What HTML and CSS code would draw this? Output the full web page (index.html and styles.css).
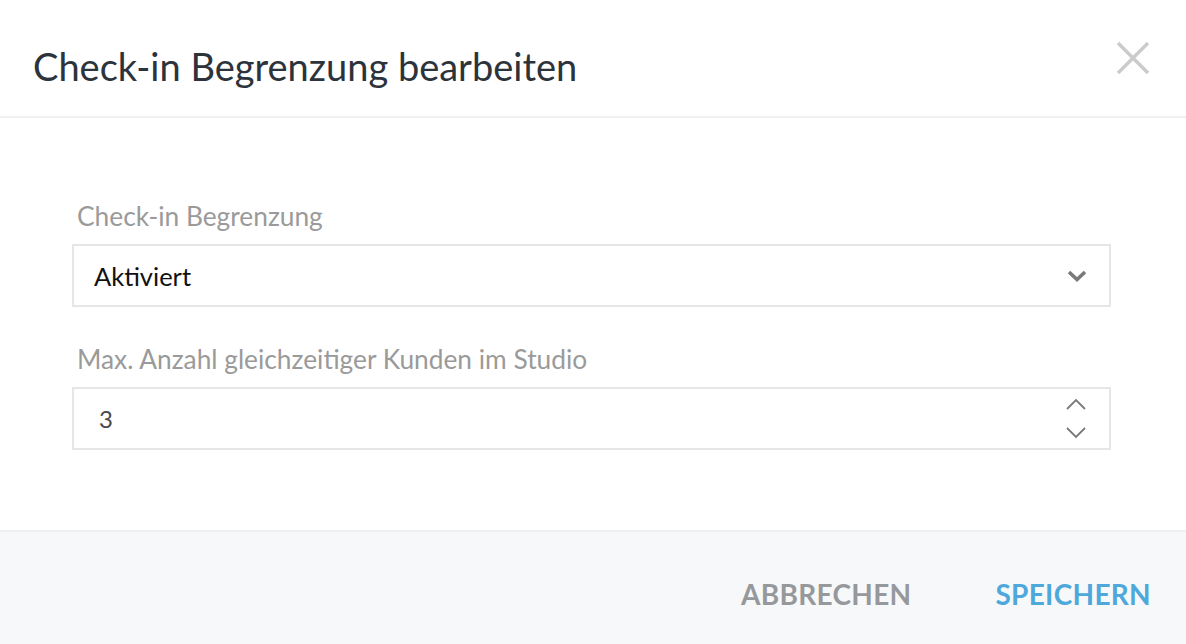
FILE: index.html
```html
<!DOCTYPE html>
<html lang="de">
<head>
    <meta charset="UTF-8">
    <title>Check-in Begrenzung bearbeiten</title>
    <link rel="stylesheet" href="styles.css">
</head>
<body>
    <div class="modal">
        <header class="modal-header">
            <h1>Check-in Begrenzung bearbeiten</h1>
            <button class="close" aria-label="Schließen">
                <svg width="34" height="34" viewBox="0 0 34 34">
                    <path d="M2 2 L32 32 M32 2 L2 32" stroke="#cbcbcb" stroke-width="3.4" fill="none"/>
                </svg>
            </button>
        </header>
        <div class="modal-body">
            <div class="field">
                <label>Check-in Begrenzung</label>
                <div class="select">
                    <span>Aktiviert</span>
                    <svg width="20" height="14" viewBox="0 0 20 14">
                        <path d="M2 3 L10 10.5 L18 3" stroke="#7a7a7a" stroke-width="3.6" fill="none"/>
                    </svg>
                </div>
            </div>
            <div class="field">
                <label>Max. Anzahl gleichzeitiger Kunden im Studio</label>
                <div class="number">
                    <span>3</span>
                    <span class="spinner">
                        <svg width="22" height="12" viewBox="0 0 22 12">
                            <path d="M2 11 L11 2 L20 11" stroke="#7a7a7a" stroke-width="1.8" fill="none"/>
                        </svg>
                        <svg width="22" height="12" viewBox="0 0 22 12">
                            <path d="M2 1 L11 10 L20 1" stroke="#7a7a7a" stroke-width="1.8" fill="none"/>
                        </svg>
                    </span>
                </div>
            </div>
        </div>
        <footer class="modal-footer">
            <button class="btn btn-cancel">ABBRECHEN</button>
            <button class="btn btn-save">SPEICHERN</button>
        </footer>
    </div>
</body>
</html>
```

FILE: styles.css
```css
body {
    margin: 0;
    font-family: "Lato", "Noto Sans", sans-serif;
    background-color: #fff;
}

.modal {
    display: flex;
    flex-direction: column;
    height: 644px;
}

.modal-header {
    height: 116px;
    flex-shrink: 0;
    border-bottom: 2px solid #f0f0f0;
    display: flex;
    align-items: center;
    justify-content: space-between;
    padding: 0 36px 0 33px;
}

.modal-header h1 {
    margin: 16px 0 0;
    font-size: 38px;
    font-weight: 400;
    color: #2d333b;
}

.close {
    border: 0;
    background: none;
    padding: 0;
    display: flex;
}

.modal-body {
    flex: 1;
    padding: 83px 75px 0 72px;
}

.field {
    margin-bottom: 37px;
}

.field label {
    display: block;
    font-size: 26.3px;
    line-height: 30px;
    color: #9a9a9a;
    padding-left: 5px;
    margin-bottom: 13px;
}

.select,
.number {
    height: 59px;
    border: 2px solid #e6e6e6;
    display: flex;
    align-items: center;
    justify-content: space-between;
    padding: 0 22px 0 20px;
}

.select span {
    font-size: 25.5px;
    color: #111;
}

.number span {
    font-size: 24px;
    color: #4a4a4a;
    padding-left: 5px;
}

.number .spinner {
    display: flex;
    flex-direction: column;
    gap: 17px;
    padding: 0;
}

.modal-footer {
    height: 100px;
    flex-shrink: 0;
    border-top: 2px solid #eff0f1;
    background-color: #f7f8f9;
    display: flex;
    justify-content: flex-end;
    align-items: center;
    gap: 84px;
    padding: 12px 35px 0 0;
}

.btn {
    border: 0;
    background: none;
    padding: 0;
    font-family: inherit;
    font-size: 28px;
    font-weight: 700;
    letter-spacing: 0.3px;
}

.btn-cancel {
    color: #96989c;
}

.btn-save {
    color: #4ea8dc;
}
```
